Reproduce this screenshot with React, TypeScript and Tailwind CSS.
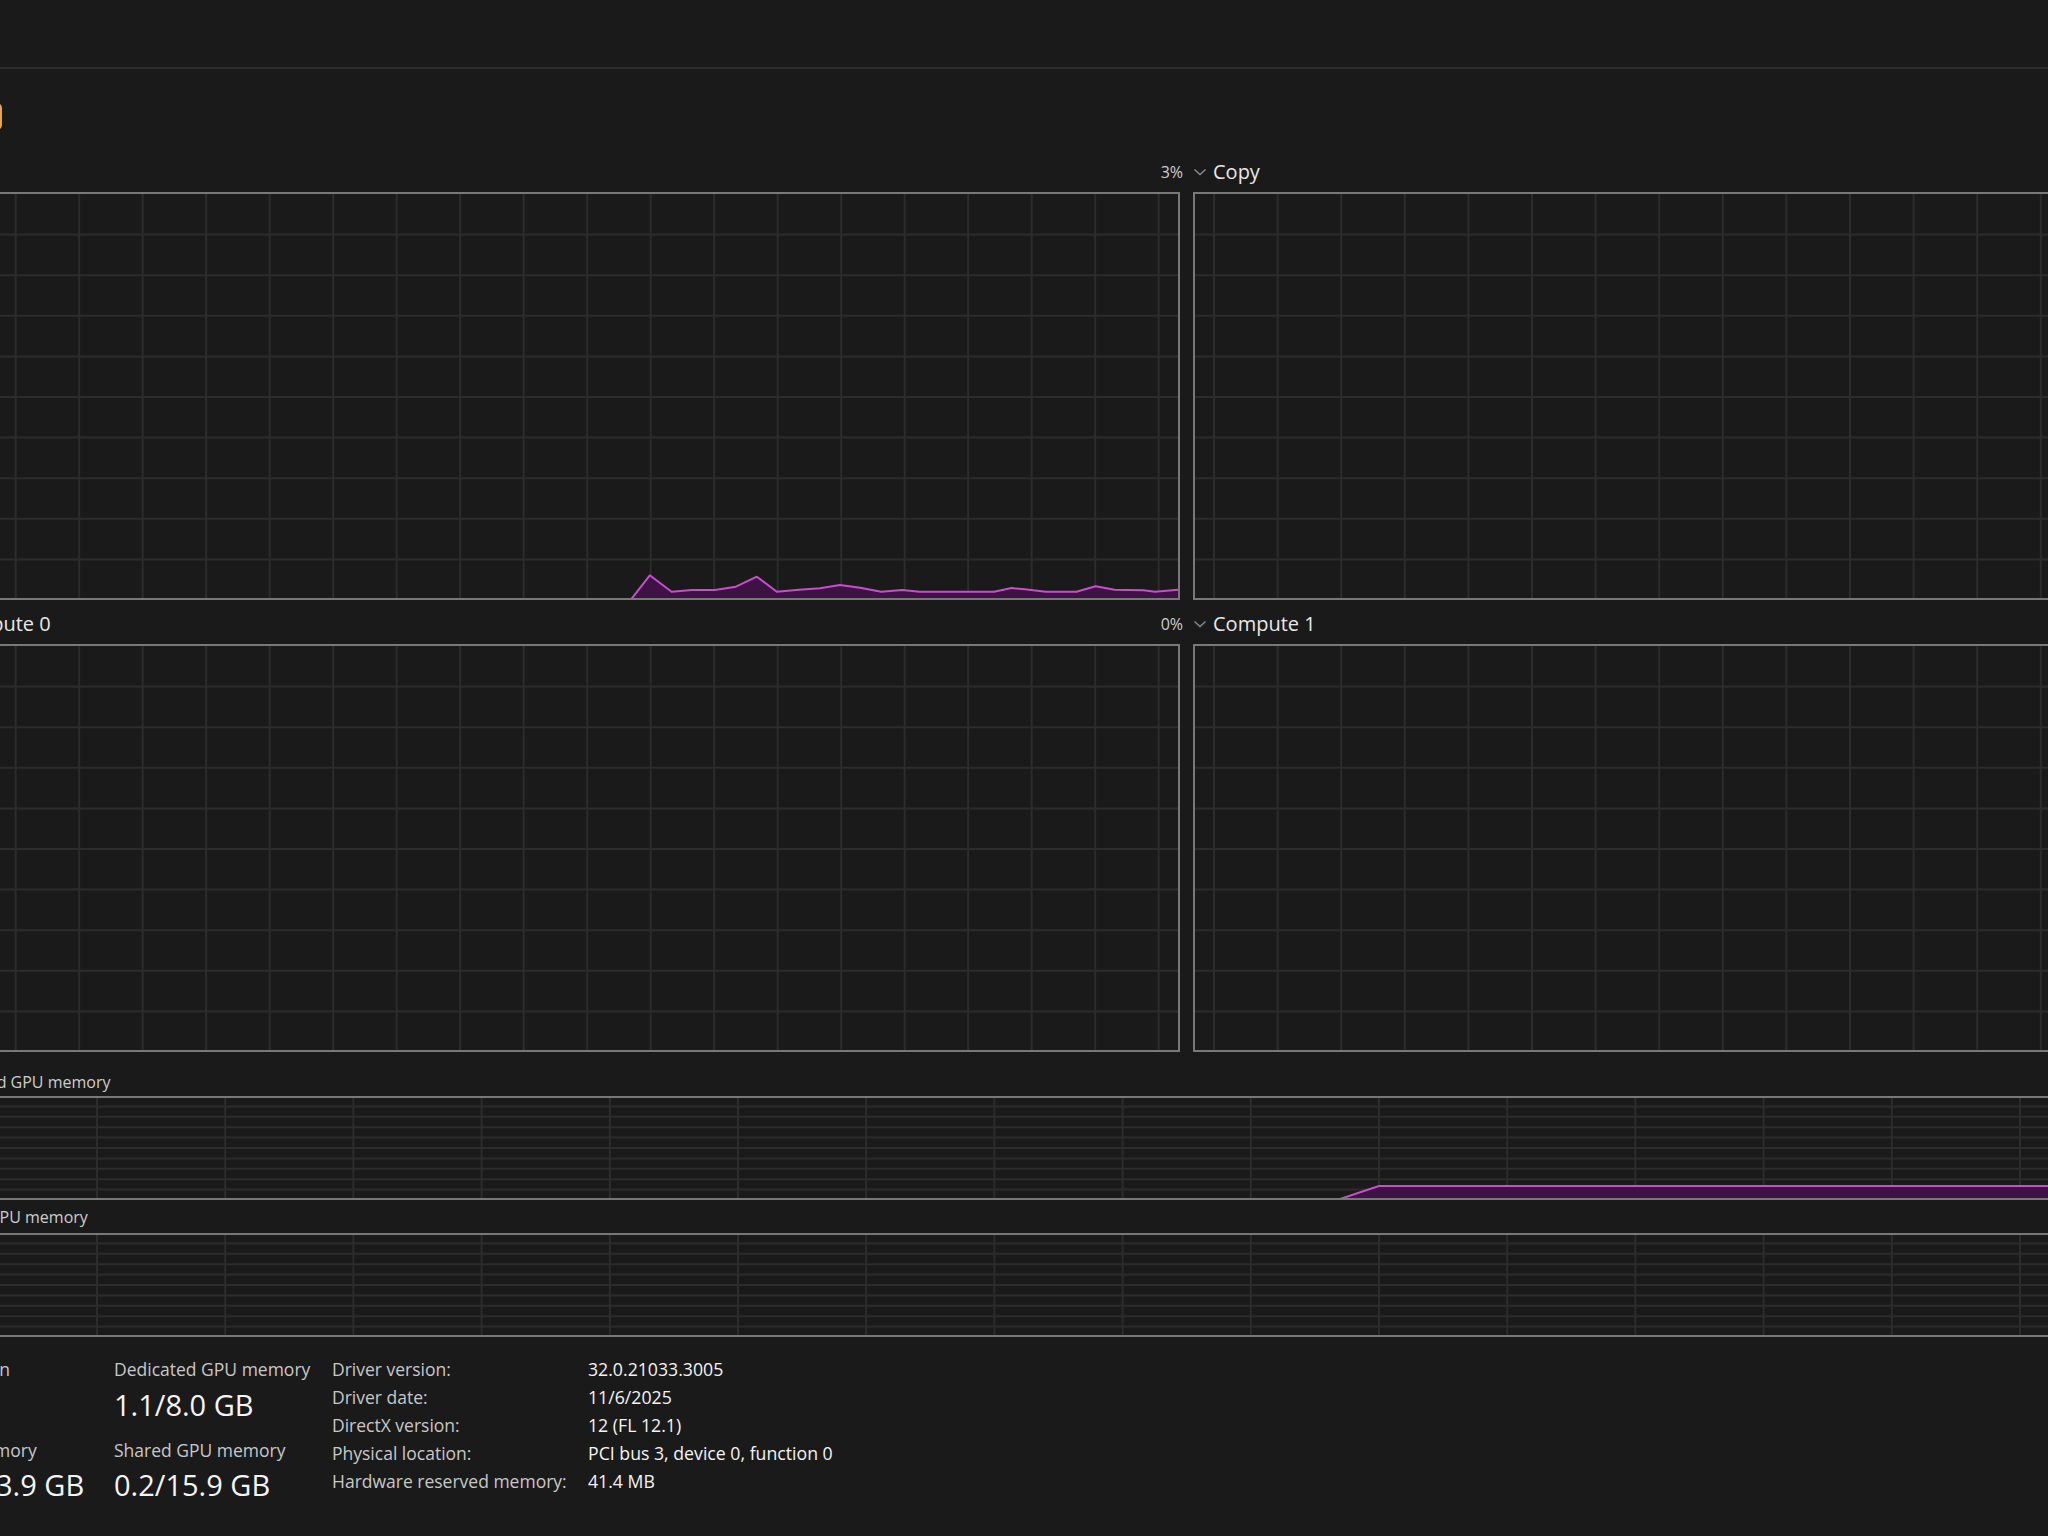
import React from "react";

type Pt = [number, number];

const GRID = "#2c2c2c";
const LINE = "#c64fcd";
const FILL = "#3e1245";

function Graph({
  box,
  iw,
  ih,
  vOff,
  vStep,
  rowStep,
  rowOff,
  data,
}: {
  box: string;
  iw: number;
  ih: number;
  vOff: number;
  vStep: number;
  rowStep: number;
  rowOff: number;
  data?: Pt[];
}) {
  const xs: number[] = [];
  for (let x = vOff; x < iw; x += vStep) xs.push(x);
  const ys: number[] = [];
  for (let k = 1; k < 10; k++) ys.push(rowOff + k * rowStep);
  const line = data ? data.map((p) => p.join(",")).join(" ") : "";
  const poly = data
    ? line + ` ${data[data.length - 1][0]},${ih + 2} ${data[0][0]},${ih + 2}`
    : "";
  return (
    <div className={`border-2 border-[#787878] ${box}`}>
      <svg width={iw} height={ih} className="block">
        {xs.map((x) => (
          <line key={"v" + x} x1={x} x2={x} y1={0} y2={ih} stroke={GRID} strokeWidth={2} />
        ))}
        {ys.map((y) => (
          <line key={"h" + y} x1={0} x2={iw} y1={y} y2={y} stroke={GRID} strokeWidth={2} />
        ))}
        {data && <polygon points={poly} fill={FILL} />}
        {data && (
          <polyline points={line} fill="none" stroke={LINE} strokeWidth={2} strokeLinejoin="round" />
        )}
      </svg>
    </div>
  );
}

function Chevron() {
  return (
    <svg width="14" height="8" viewBox="0 0 14 8" className="block">
      <polyline points="1.5,1.5 7,6.5 12.5,1.5" fill="none" stroke="#8c8c8c" strokeWidth="1.4" />
    </svg>
  );
}

function EngineHeader({ name, pct }: { name: string; pct: string }) {
  return (
    <div className="h-[28px] flex items-center justify-between">
      <div className="flex items-center gap-[6px]">
        <Chevron />
        <span className="text-[20px] leading-[28px] text-[#e8e8e8]">{name}</span>
      </div>
      <span className="text-[16px] leading-[28px] text-[#cfcfcf] -mr-[3px]">{pct}</span>
    </div>
  );
}

const d3: Pt[] = [
  [700.6, 406],
  [719.8, 381.3],
  [741.6, 397.7],
  [761.8, 396],
  [784.8, 396],
  [805.9, 392.7],
  [826.9, 382.7],
  [846.8, 397.7],
  [869, 395.7],
  [890, 394.3],
  [910, 391],
  [930.2, 393.7],
  [951.3, 397.7],
  [972.3, 396],
  [989.6, 397.7],
  [1064.2, 397.7],
  [1081.4, 394],
  [1094.8, 395.3],
  [1115.8, 397.7],
  [1146.5, 397.7],
  [1165.6, 392.3],
  [1184.7, 395.7],
  [1213.4, 396.3],
  [1225, 397.7],
  [1249, 395.7],
];

const mem1: Pt[] = [
  [1410, 101],
  [1449, 88],
  [2514, 88],
];

function StatCol({
  w,
  l1,
  v1,
  l2,
  v2,
}: {
  w: string;
  l1: string;
  v1: string;
  l2: string;
  v2: string;
}) {
  return (
    <div className={`${w} shrink-0`}>
      <div className="text-[17.5px] leading-[28px] text-[#c8c8c8] whitespace-nowrap">{l1}</div>
      <div className="mt-[2px] text-[29px] leading-[40px] text-[#f4f4f4] whitespace-nowrap">{v1}</div>
      <div className="mt-[11px] text-[17.5px] leading-[28px] text-[#c8c8c8] whitespace-nowrap">{l2}</div>
      <div className="mt-[1px] text-[29px] leading-[40px] text-[#f4f4f4] whitespace-nowrap">{v2}</div>
    </div>
  );
}

const info: [string, string][] = [
  ["Driver version:", "32.0.21033.3005"],
  ["Driver date:", "11/6/2025"],
  ["DirectX version:", "12 (FL 12.1)"],
  ["Physical location:", "PCI bus 3, device 0, function 0"],
  ["Hardware reserved memory:", "41.4 MB"],
];

export default function App() {
  return (
    <div className="w-[2048px] h-[1536px] overflow-hidden bg-[#1a1a1a] font-['Open_Sans',sans-serif]">
      <div className="h-[69px] border-b-2 border-[#2e2e2e]" />
      <div className="h-[89px] flex items-start">
        <div className="mt-[34px] -ml-[24px] w-[26px] h-[27px] rounded-[5px] border-2 border-[#eaa24f]" />
      </div>

      <div className="-ml-[72px] w-[2517px]">
        <div className="grid grid-cols-[1252px_1252px] gap-x-[13px]">
          <div>
            <EngineHeader name="3D" pct="3%" />
            <div className="mt-[6px]">
              <Graph box="w-[1252px] h-[408px]" iw={1248} ih={404} vOff={22.2} vStep={63.5} rowStep={40.6} rowOff={0} data={d3} />
            </div>
          </div>
          <div>
            <EngineHeader name="Copy" pct="0%" />
            <div className="mt-[6px]">
              <Graph box="w-[1252px] h-[408px]" iw={1248} ih={404} vOff={19} vStep={63.6} rowStep={40.6} rowOff={0} />
            </div>
          </div>
          <div className="mt-[10px]">
            <EngineHeader name="Compute 0" pct="0%" />
            <div className="mt-[6px]">
              <Graph box="w-[1252px] h-[408px]" iw={1248} ih={404} vOff={22.2} vStep={63.5} rowStep={40.6} rowOff={0} />
            </div>
          </div>
          <div className="mt-[10px]">
            <EngineHeader name="Compute 1" pct="0%" />
            <div className="mt-[6px]">
              <Graph box="w-[1252px] h-[408px]" iw={1248} ih={404} vOff={19} vStep={63.6} rowStep={40.6} rowOff={0} />
            </div>
          </div>
        </div>

        <div className="mt-[19px] h-[22px] pl-[3px] flex justify-between text-[16px] leading-[22px] text-[#cdcdcd]">
          <span>Dedicated GPU memory</span>
          <span>8.0 GB</span>
        </div>
        <div className="mt-[3px]">
          <Graph box="w-[2517px] h-[104px]" iw={2513} ih={100} vOff={38.8} vStep={128.2} rowStep={10.4} rowOff={-2} data={mem1} />
        </div>
        <div className="mt-[6px] h-[22px] pl-[3px] flex justify-between text-[16px] leading-[22px] text-[#cdcdcd]">
          <span>Shared GPU memory</span>
          <span>15.9 GB</span>
        </div>
        <div className="mt-[5px]">
          <Graph box="w-[2517px] h-[104px]" iw={2513} ih={100} vOff={38.8} vStep={128.2} rowStep={10.4} rowOff={-2} />
        </div>

        <div className="mt-[18px] flex items-start">
          <StatCol w="w-[186px]" l1="Utilization" v1="3%" l2="GPU Memory" v2="1.3/23.9 GB" />
          <StatCol w="w-[218px]" l1="Dedicated GPU memory" v1="1.1/8.0 GB" l2="Shared GPU memory" v2="0.2/15.9 GB" />
          <div className="grid grid-cols-[256px_auto] content-start text-[17.5px] leading-[28px]">
            {info.map(([k, v]) => (
              <React.Fragment key={k}>
                <div className="text-[#c8c8c8] whitespace-nowrap">{k}</div>
                <div className="text-[17.7px] text-[#f4f4f4] whitespace-nowrap">{v}</div>
              </React.Fragment>
            ))}
          </div>
        </div>
      </div>
    </div>
  );
}
